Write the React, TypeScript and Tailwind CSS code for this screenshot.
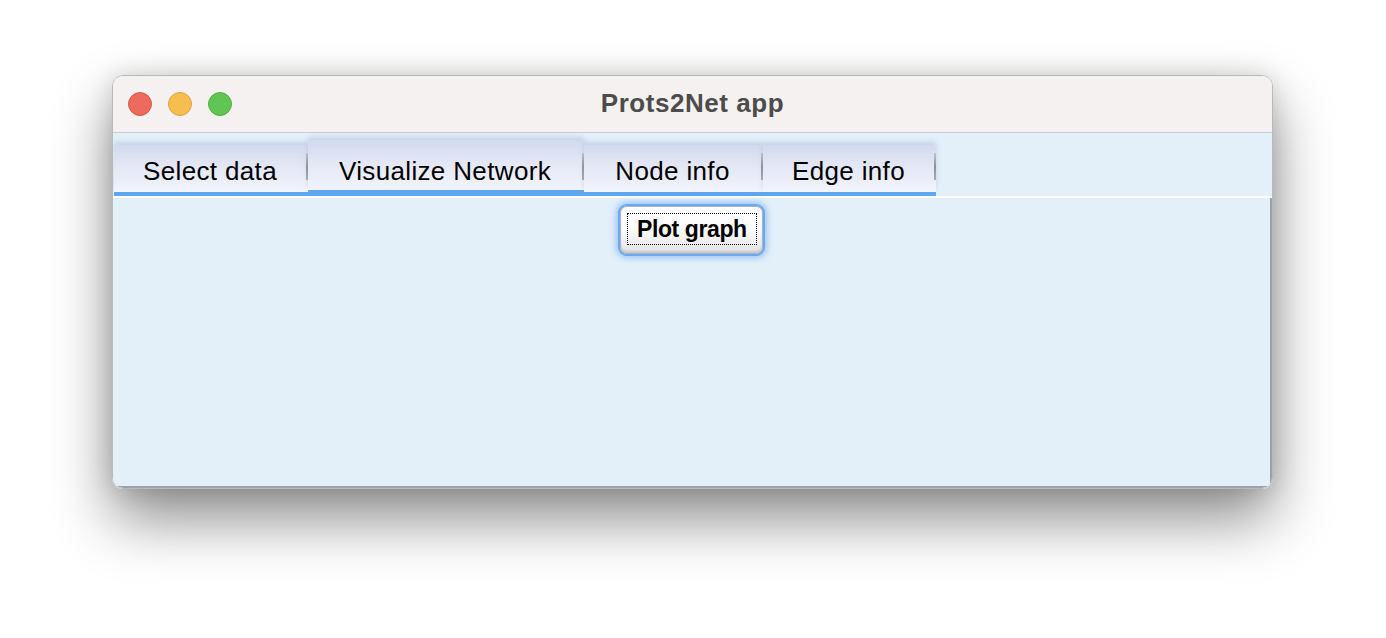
import React from "react";

const tabs = [
  { label: "Select data", w: "w-[194px]", selected: false },
  { label: "Visualize Network", w: "w-[276px]", selected: true },
  { label: "Node info", w: "w-[179px]", selected: false },
  { label: "Edge info", w: "w-[173px]", selected: false },
];

function Tab({ label, w, selected }: { label: string; w: string; selected: boolean }) {
  return (
    <div
      className={`${w} flex flex-col ${selected ? "h-[56px] border-b-[6px]" : "h-[51px] border-b-[4px]"} border-[#5ea6ef]`}
    >
      <div className="flex-1 flex flex-row items-end bg-gradient-to-b from-[#d3d9ee] via-[#e5e9f6] to-[#f1f4fb] shadow-[0_-3px_5px_rgba(150,165,205,0.4)] rounded-t-[2px]">
        <div
          className={`flex-1 text-center text-[26px] leading-[30px] tracking-[0.35px] text-black ${selected ? "pb-[4px]" : "pb-[6px]"}`}
          style={{ fontFamily: '"Liberation Sans", Arial, sans-serif' }}
        >
          {label}
        </div>
        <div
          className={`w-[2px] h-[27px] bg-gradient-to-b from-[#c0c4cc] via-[#8e9096] to-[#a8abb2] ${selected ? "mb-[10px]" : "mb-[12px]"}`}
        />
      </div>
    </div>
  );
}

export default function App() {
  return (
    <div className="w-[1386px] h-[638px] bg-white flex flex-col pl-[112px] pt-[75px] overflow-hidden">
      <div className="w-[1161px] h-[414px] rounded-[11px] overflow-hidden flex flex-col border border-[#b9b9b9] shadow-[0_30px_60px_rgba(0,0,0,0.45),0_0_24px_rgba(0,0,0,0.14)]">
        {/* Title bar */}
        <div className="h-[57px] shrink-0 bg-[#f6f1f1] border-b border-[#cbcdd2] grid grid-cols-[1fr_auto_1fr] items-center">
          <div className="flex flex-row items-center gap-[16px] pl-[15px]">
            <div className="w-[24px] h-[24px] rounded-full bg-[#ee6a5f] border border-[#d65a50]" />
            <div className="w-[24px] h-[24px] rounded-full bg-[#f5be4f] border border-[#dca43c]" />
            <div className="w-[24px] h-[24px] rounded-full bg-[#61c554] border border-[#52ad45]" />
          </div>
          <div
            className="text-[26px] font-bold text-[#4c4c4c] tracking-[0.55px] leading-[30px] pb-[2px]"
            style={{ fontFamily: '"Liberation Sans", Arial, sans-serif' }}
          >
            Prots2Net app
          </div>
          <div />
        </div>

        {/* Content */}
        <div className="flex-1 bg-[#e3f0fa] flex flex-col">
          <div className="h-[63px] shrink-0 flex flex-row items-end gap-0 pl-[1px]">
            {tabs.map((t) => (
              <Tab key={t.label} {...t} />
            ))}
          </div>
          <div className="h-[2px] bg-white shrink-0" />
          <div className="flex-1 flex flex-col items-center pt-[8px] border-r-2 border-b-2 border-[#9da2a9]">
            <button
              className="w-[143px] h-[48px] rounded-[7px] bg-gradient-to-b from-white via-[#fbfbfb] to-[#e2e2e2] border border-[#a9b4c4] shadow-[0_0_0_2px_rgba(105,165,238,0.95),0_0_6px_4px_rgba(105,165,238,0.6),inset_0_-2px_2px_rgba(0,0,0,0.12)] flex flex-col items-start pl-[6px] pt-[6px]"
            >
              <div
                className="border border-dotted border-black px-[9px] pt-[2px] pb-[2px] text-[23px] font-bold leading-[26px] text-black tracking-[-0.4px]"
                style={{ fontFamily: '"Liberation Sans", Arial, sans-serif' }}
              >
                Plot graph
              </div>
            </button>
          </div>
        </div>
      </div>
    </div>
  );
}
